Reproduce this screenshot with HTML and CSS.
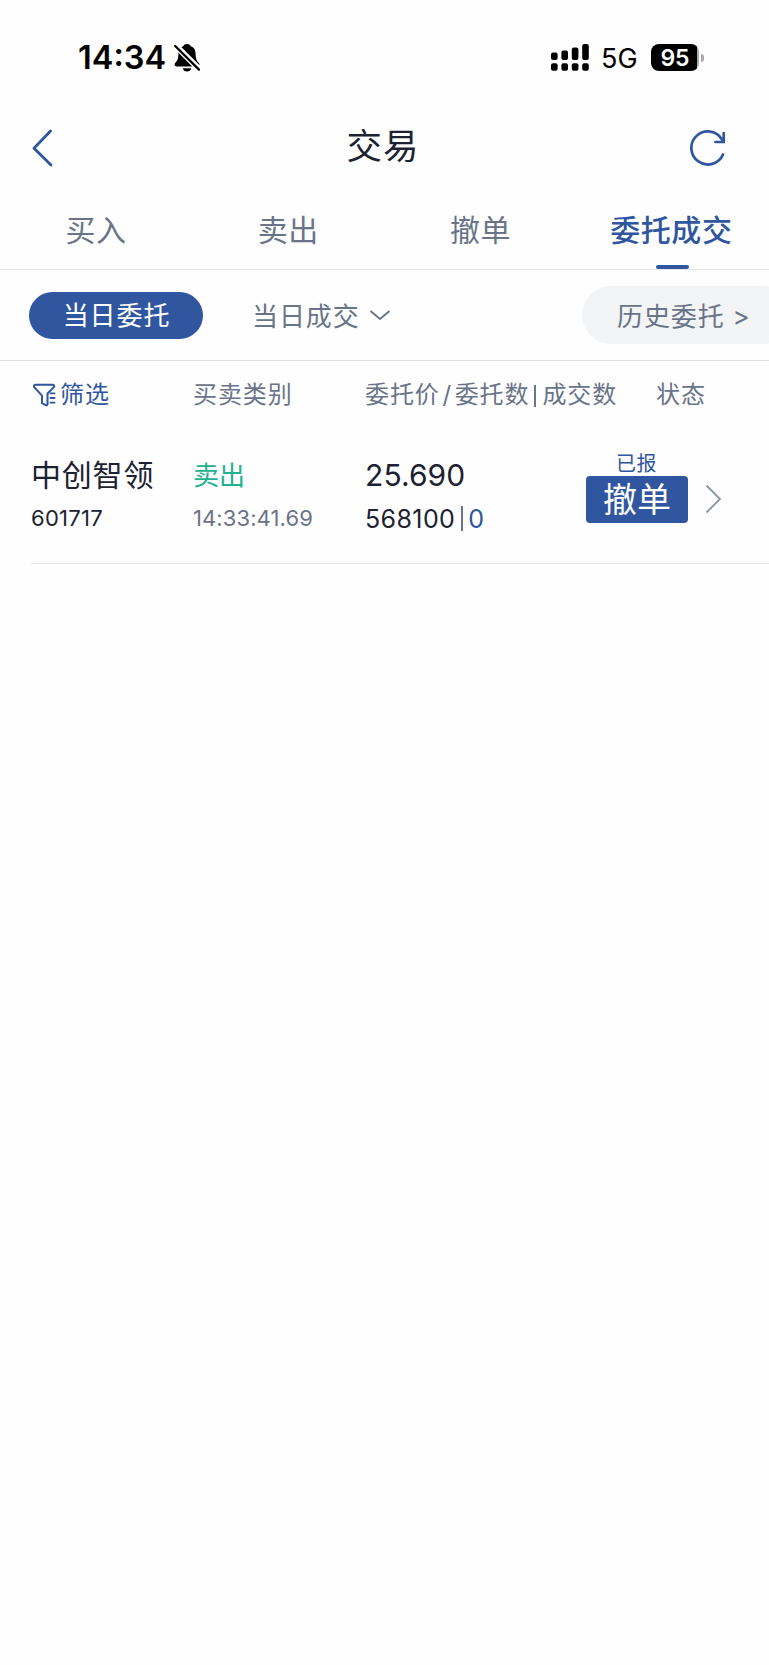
FILE: index.html
```html
<!DOCTYPE html>
<html lang="zh-CN">
<head>
    <meta charset="UTF-8">
    <meta name="viewport" content="width=device-width, initial-scale=1.0">
    <title>交易</title>
    <link rel="stylesheet" href="styles.css">
</head>
<body>

    <div class="status-bar">
        <div class="status-left">
            <span class="clock">14:34</span>
            <svg class="bell" width="26" height="28" viewBox="0 0 26 28">
                <path d="M13 0C10.5 0 9.6 1.2 9.3 2.2C5.5 3.4 4.5 6.5 4.4 10C4.3 15 3.3 16.6 1.1 19C0 20.5.6 22.4 2.6 22.4H23.4C25.4 22.4 26 20.5 24.9 19C22.7 16.6 21.7 15 21.6 10C21.5 6.5 20.5 3.4 16.7 2.2C16.4 1.2 15.5 0 13 0Z"/>
                <path d="M8.6 24.3H17.4C16.8 26.3 15.2 27.6 13 27.6S9.2 26.3 8.6 24.3Z"/>
                <path d="M0 0L26 26" stroke="#fff" stroke-width="6"/>
                <path d="M1.2 2L25 25.6" stroke="#000" stroke-width="2.3" stroke-linecap="round"/>
            </svg>
        </div>
        <div class="status-right">
            <svg width="38" height="27" viewBox="0 0 38 27">
                <rect x="0" y="8.5" width="6.6" height="7.5" rx="2"/>
                <rect x="10.4" y="6.5" width="6.6" height="9.5" rx="2"/>
                <rect x="20.8" y="3.5" width="6.6" height="12.5" rx="2"/>
                <rect x="31.2" y="0" width="6.6" height="16" rx="2"/>
                <rect x="0" y="19.2" width="6.6" height="7.5" rx="2"/>
                <rect x="10.4" y="19.2" width="6.6" height="7.5" rx="2"/>
                <rect x="20.8" y="19.2" width="6.6" height="7.5" rx="2"/>
                <rect x="31.2" y="19.2" width="6.6" height="7.5" rx="2"/>
            </svg>
            <span class="network">5G</span>
            <div class="battery"><span>95</span></div>
            <div class="battery-tip"></div>
        </div>
    </div>

    <div class="nav-bar">
        <svg class="line-icon" width="22" height="40" viewBox="0 0 22 40">
            <path d="M19.5 3L3 20.2L20 37" stroke-width="2.8"/>
        </svg>
        <h1 class="title">交易</h1>
        <svg class="line-icon" width="38" height="38" viewBox="0 0 38 38">
            <path d="M35 25.5A16.5 16.5 0 1 1 34 10.5" stroke-width="2.7"/>
            <path d="M35.7 4.2V13H27.5" stroke-width="2.7" stroke-linejoin="miter"/>
        </svg>
    </div>

    <div class="tabs">
        <div class="tab">买入</div>
        <div class="tab">卖出</div>
        <div class="tab">撤单</div>
        <div class="tab active">委托成交</div>
    </div>

    <div class="sub-tabs">
        <div class="pill selected">当日委托</div>
        <div class="deals">
            <span>当日成交</span>
            <svg width="22" height="12" viewBox="0 0 22 12">
                <path d="M1.5 2L11 10L20.5 2" fill="none" stroke="#697488" stroke-width="1.8"/>
            </svg>
        </div>
        <div class="pill history">历史委托 <span class="gt">&gt;</span></div>
    </div>

    <div class="grid table-head">
        <div class="filter">
            <svg class="line-icon" width="23" height="24" viewBox="0 0 23 24">
                <path d="M13.2 22.3L9 20.2V12.6L1.4 4.4C.5 3.2.9 1.8 2.4 1.8H19.5C21.2 1.8 21.7 3.2 20.7 4.4L14.5 10.5V21.2Q14.3 22.6 13.2 22.3" stroke-width="2"/>
                <path d="M17.4 10.3H21.6M17.4 15H21.6M17.4 19.7H21.6" stroke-width="1.8"/>
            </svg>
            <span>筛选</span>
        </div>
        <div>买卖类别</div>
        <div class="head-price">委托价<i>/</i>委托数<i class="sep"></i>成交数</div>
        <div class="head-status">状态</div>
    </div>

    <div class="grid order">
        <div>
            <div class="line name">中创智领</div>
            <div class="line code">601717</div>
        </div>
        <div>
            <div class="line side">卖出</div>
            <div class="line time">14:33:41.69</div>
        </div>
        <div>
            <div class="line price">25.690</div>
            <div class="line amount">568100<span class="bar"></span><span class="filled">0</span></div>
        </div>
        <div class="action">
            <div class="action-box">
                <div class="state">已报</div>
                <button class="cancel">撤单</button>
            </div>
            <svg class="arrow" width="17" height="30" viewBox="0 0 17 30">
                <path d="M1.5 1.5L15 15L1.5 28.5" fill="none" stroke="#8a94a6" stroke-width="1.8"/>
            </svg>
        </div>
    </div>

</body>
</html>
```

FILE: styles.css
```css
* {
    box-sizing: border-box;
}

body {
    margin: 0;
    background-color: #fefefe;
    color: #1c2231;
    font-family: Inter, "Noto Sans CJK SC", sans-serif;
    overflow-x: hidden;
}

svg {
    display: block;
    flex: none;
}

.line-icon {
    fill: none;
    stroke: #2f569f;
    stroke-linecap: round;
    stroke-linejoin: round;
}

/* Status bar */
.status-bar {
    display: flex;
    justify-content: space-between;
    height: 115px;
    padding: 43px 65px 0 78px;
    color: #000;
}

.status-left,
.status-right {
    display: flex;
    align-items: center;
    height: 29px;
}

.clock {
    width: 96px;
    font-size: 32.5px;
    font-weight: 600;
    line-height: 29px;
    white-space: nowrap;
}

.network {
    width: 36px;
    margin: 2px 14px 0 12px;
    font-size: 27px;
    line-height: 29px;
}

.battery {
    width: 48px;
    height: 27px;
    border-radius: 8px;
    background: linear-gradient(to right, #000 46px, #aaa 46px);
    color: #fff;
    font-size: 23px;
    font-weight: 600;
    line-height: 28px;
    text-align: center;
}

.battery-tip {
    width: 3px;
    height: 8px;
    margin-left: 2px;
    border-radius: 0 3px 3px 0;
    background-color: #aaa;
}

/* Title bar */
.nav-bar {
    display: flex;
    align-items: center;
    justify-content: space-between;
    height: 66px;
    padding: 0 43px 0 31px;
}

.title {
    margin: 0 0 2px 25px;
    font-size: 35.5px;
    font-weight: 400;
    line-height: 40px;
    letter-spacing: 1px;
}

/* Tabs */
.tabs {
    display: flex;
    height: 89px;
    border-bottom: 1px solid #e6e7e9;
    color: #697488;
}

.tab {
    position: relative;
    flex: 0 0 25%;
    padding-top: 29px;
    font-size: 30px;
    line-height: 40px;
    letter-spacing: 0.6px;
    text-align: center;
}

.tab.active {
    padding-right: 3px;
    color: #2f569f;
    font-weight: 500;
}

.tab.active::after {
    content: "";
    position: absolute;
    left: 79px;
    bottom: 0;
    width: 33px;
    height: 4px;
    border-radius: 2px;
    background-color: #2f569f;
}

/* Second level tabs */
.sub-tabs {
    display: flex;
    align-items: center;
    height: 91px;
    padding-left: 29px;
    border-bottom: 1px solid #dcdee5;
    color: #697488;
    font-size: 26px;
    line-height: 38px;
    letter-spacing: 0.9px;
    white-space: nowrap;
}

.pill {
    display: flex;
    align-items: center;
    flex: none;
}

.selected {
    justify-content: center;
    width: 174px;
    height: 47px;
    padding: 2px 0 0 1px;
    border-radius: 24px;
    background-color: #2f569f;
    color: #fff;
}

.deals {
    display: flex;
    align-items: center;
    gap: 9px;
    margin-left: 49px;
}

.deals span {
    padding-top: 3px;
}

.history {
    width: 210px;
    height: 58px;
    margin-left: auto;
    margin-right: -23px;
    padding: 3px 0 0 35px;
    border-radius: 29px;
    background-color: #f3f4f6;
}

.gt {
    margin-left: 8px;
}

/* Orders */
.grid {
    display: grid;
    grid-template-columns: 162px 173px 220px 1fr;
}

.table-head {
    align-items: center;
    height: 68px;
    padding-left: 31px;
    color: #697488;
    font-size: 24px;
    line-height: 30px;
    letter-spacing: 0.9px;
    white-space: nowrap;
}

.filter {
    display: flex;
    align-items: center;
    gap: 4px;
    padding-left: 2px;
    color: #2f569f;
}

.head-price {
    margin-left: -1px;
}

.head-price i {
    display: inline-block;
    width: 15px;
    font-style: normal;
    text-align: center;
}

.head-price .sep {
    width: 2px;
    height: 22px;
    margin: 0 6px 0 5px;
    background-color: #697488;
    vertical-align: -4px;
}

.head-status {
    padding-left: 70px;
}

.order {
    height: 135px;
    margin-left: 31px;
    padding-top: 23px;
    border-bottom: 1px solid #e6e7e9;
}

.line {
    height: 44px;
    line-height: 44px;
    white-space: nowrap;
}

.name,
.price {
    padding-top: 1px;
}

.name {
    font-size: 30px;
    letter-spacing: 0.8px;
}

.code,
.time {
    font-size: 22px;
    letter-spacing: 0.1px;
}

.code {
    letter-spacing: 0.3px;
}

.side {
    padding-top: 2px;
    color: #24b08f;
    font-size: 26px;
}

.time {
    color: #697488;
}

.price {
    margin-left: -1px;
    font-size: 30px;
    letter-spacing: 0.1px;
}

.amount {
    display: flex;
    align-items: center;
    margin-left: -1px;
    padding-top: 1px;
    font-size: 25px;
    letter-spacing: 0.4px;
}

.bar {
    width: 2px;
    height: 25px;
    margin: 0 5px 0 6px;
    background-color: #697488;
}

.filled {
    color: #2f569f;
}

.action {
    display: flex;
    align-items: flex-start;
    gap: 17px;
}

.action-box {
    width: 103px;
    text-align: center;
}

.state {
    padding-right: 2px;
    color: #2f569f;
    font-size: 20px;
    line-height: 24px;
    letter-spacing: 0.5px;
}

.cancel {
    display: block;
    width: 102px;
    height: 47px;
    padding: 0;
    border: none;
    border-radius: 4px;
    background-color: #2f569f;
    color: #fff;
    font-family: inherit;
    font-size: 34px;
    line-height: 47px;
}

.arrow {
    margin: 32px 0 0 -1px;
}
```
